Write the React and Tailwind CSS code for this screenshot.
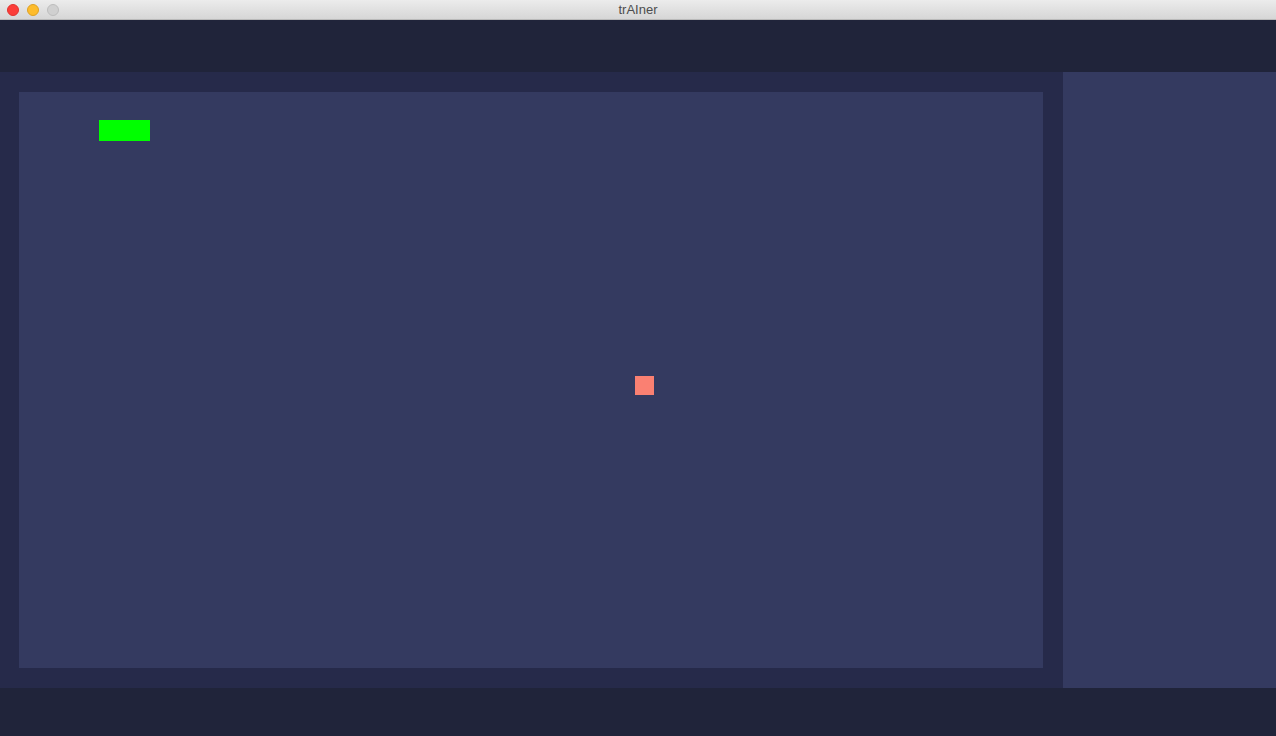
const lights = [
  { bg: 'bg-[#fc3d39]', border: 'border-[#e0332f]' },
  { bg: 'bg-[#fdbc2c]', border: 'border-[#dea123]' },
  { bg: 'bg-[#d0d0d0]', border: 'border-[#bdbdbd]' },
]

function TitleBar() {
  return (
    <div className="relative flex h-[20px] items-center border-b border-[#b9b9b9] bg-gradient-to-b from-[#ececec] to-[#d6d6d6]">
      <div className="flex items-center gap-[8px] pl-[7px]">
        {lights.map((l, i) => (
          <span key={i} className={`h-[12px] w-[12px] rounded-full border ${l.bg} ${l.border}`} />
        ))}
      </div>
      <div className="absolute inset-0 flex items-center justify-center text-[13px] text-[#4d4d4d] font-['Liberation_Sans',sans-serif]">
        trAIner
      </div>
    </div>
  )
}

export default function App() {
  return (
    <div className="flex h-[736px] w-[1276px] flex-col overflow-hidden bg-[#20243a]">
      <TitleBar />
      {/* header strip */}
      <div className="h-[52px] bg-[#20243a]" />

      <div className="flex h-[616px]">
        {/* game area */}
        <div className="w-[1063px] bg-[#262a4a] pt-[20px] pl-[19px]">
          <div className="relative h-[576px] w-[1024px] bg-[#343a60]">
            <div className="absolute left-[80px] top-[28px] h-[21px] w-[51px] bg-[#00ff00]" />
            <div className="absolute left-[616px] top-[284px] h-[19px] w-[19px] bg-[#fa8072]" />
          </div>
        </div>
        {/* side panel */}
        <div className="flex-1 bg-[#343a60]" />
      </div>

      <div className="flex-1 bg-[#20243a]" />
    </div>
  )
}
